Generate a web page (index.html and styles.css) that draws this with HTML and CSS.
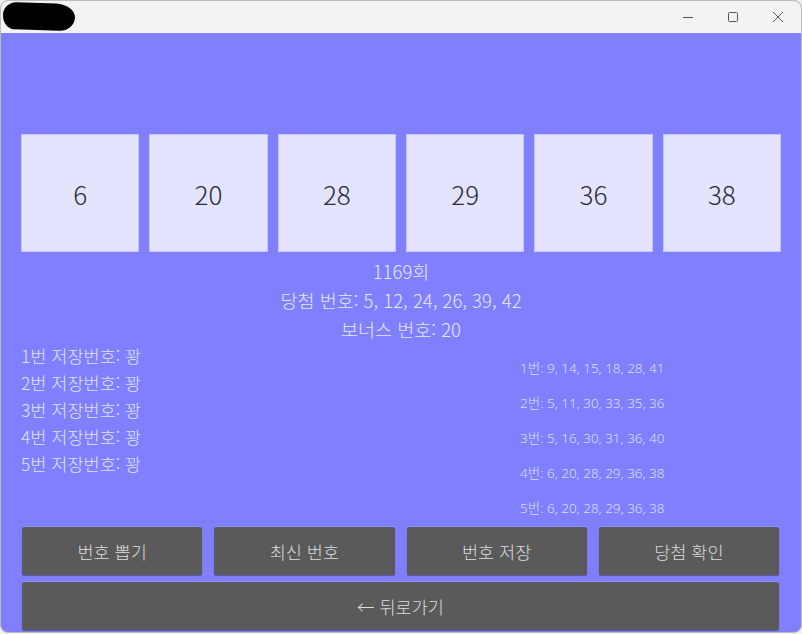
FILE: index.html
```html
<!DOCTYPE html>
<html lang="ko">
<head>
<meta charset="utf-8">
<title>로또</title>
<link rel="stylesheet" href="styles.css">
</head>
<body>
<div class="window">
  <div class="titlebar">
    <div class="blob"></div>
    <div class="controls">
      <span class="ctl"><svg width="12" height="12" viewBox="0 0 12 12"><path d="M1 6.5h10" stroke="#555" stroke-width="1"/></svg></span>
      <span class="ctl"><svg width="12" height="12" viewBox="0 0 12 12"><rect x="1.5" y="1.5" width="9" height="9" rx="1" fill="none" stroke="#555" stroke-width="1"/></svg></span>
      <span class="ctl"><svg width="12" height="12" viewBox="0 0 12 12"><path d="M1 1L11 11M11 1L1 11" stroke="#555" stroke-width="1"/></svg></span>
    </div>
  </div>
  <div class="content">
    <div class="balls">
      <div class="ball">6</div>
      <div class="ball">20</div>
      <div class="ball">28</div>
      <div class="ball">29</div>
      <div class="ball">36</div>
      <div class="ball">38</div>
    </div>
    <div class="info">
      <div>1169회</div>
      <div>당첨 번호: 5, 12, 24, 26, 39, 42</div>
      <div>보너스 번호: 20</div>
    </div>
    <div class="lists">
      <div class="saved">
        <div>1번 저장번호: 꽝</div>
        <div>2번 저장번호: 꽝</div>
        <div>3번 저장번호: 꽝</div>
        <div>4번 저장번호: 꽝</div>
        <div>5번 저장번호: 꽝</div>
      </div>
      <div class="picks">
        <div>1번: 9, 14, 15, 18, 28, 41</div>
        <div>2번: 5, 11, 30, 33, 35, 36</div>
        <div>3번: 5, 16, 30, 31, 36, 40</div>
        <div>4번: 6, 20, 28, 29, 36, 38</div>
        <div>5번: 6, 20, 28, 29, 36, 38</div>
      </div>
    </div>
    <div class="buttons">
      <button class="btn">번호 뽑기</button>
      <button class="btn">최신 번호</button>
      <button class="btn">번호 저장</button>
      <button class="btn">당첨 확인</button>
      <button class="btn wide">← 뒤로가기</button>
    </div>
  </div>
</div>
</body>
</html>
```
FILE: styles.css
```css
html, body {
  margin: 0;
  padding: 0;
  background: #f0f0f0;
}
body {
  width: 802px;
  height: 634px;
  overflow: hidden;
  font-family: "Noto Sans CJK KR", "Noto Sans", sans-serif;
}
.window {
  width: 802px;
  height: 633px;
  box-sizing: border-box;
  border: 1px solid #bdbdbd;
  border-radius: 8px;
  overflow: hidden;
  display: flex;
  flex-direction: column;
  background: #8080ff;
}
.titlebar {
  height: 32px;
  flex: none;
  background: #f3f3f3;
  display: flex;
  align-items: center;
  justify-content: space-between;
  position: relative;
}
.blob {
  position: absolute;
  left: 2px;
  top: 2px;
  width: 72px;
  height: 27px;
  background: #000;
  border-radius: 14px 20px 16px 12px / 13px 14px 14px 14px;
  transform: rotate(2deg);
}
.controls {
  margin-left: auto;
  display: flex;
  height: 32px;
}
.ctl {
  width: 45px;
  height: 32px;
  display: flex;
  align-items: center;
  justify-content: center;
}
.ctl:last-child {
  width: 46px;
}
.content {
  flex: 1;
  padding: 101px 20px 0 20px;
  display: flex;
  flex-direction: column;
}
.balls {
  display: grid;
  grid-template-columns: repeat(6, 1fr);
  gap: 10px;
}
.ball {
  height: 118px;
  box-sizing: border-box;
  background: #e4e4ff;
  border: 1px solid #c4c4ff;
  display: flex;
  align-items: center;
  justify-content: center;
  font-size: 26px;
  font-weight: 300;
  color: #2a2a36;
}
.info {
  margin-top: 5px;
  text-align: center;
  font-size: 18.5px;
  line-height: 29px;
  font-weight: 300;
  color: #e6e6ff;
}
.lists {
  display: flex;
  margin-top: -2px;
}
.saved {
  width: 499px;
  font-size: 17.5px;
  line-height: 27px;
  font-weight: 300;
  color: #e2e2ff;
}
.picks {
  margin-top: 9px;
  font-family: "Noto Sans", "Noto Sans CJK KR", sans-serif;
  font-size: 13.5px;
  line-height: 35px;
  font-weight: 300;
  color: #dedeff;
}
.buttons {
  margin: 1px 2px 0 1px;
  display: grid;
  grid-template-columns: repeat(4, 1fr);
  column-gap: 12px;
  row-gap: 7px;
}
.btn {
  height: 48px;
  border: none;
  border-radius: 2px;
  background: #5a5a5a;
  box-shadow: 0 1px 1px rgba(0,0,0,0.35), 0 -1px 0 rgba(255,255,255,0.12);
  color: #dcdcdc;
  font-family: "Noto Sans CJK KR", "Noto Sans", sans-serif;
  font-size: 17.5px;
  font-weight: 300;
  padding: 0;
}
.wide {
  grid-column: 1 / -1;
}
```
